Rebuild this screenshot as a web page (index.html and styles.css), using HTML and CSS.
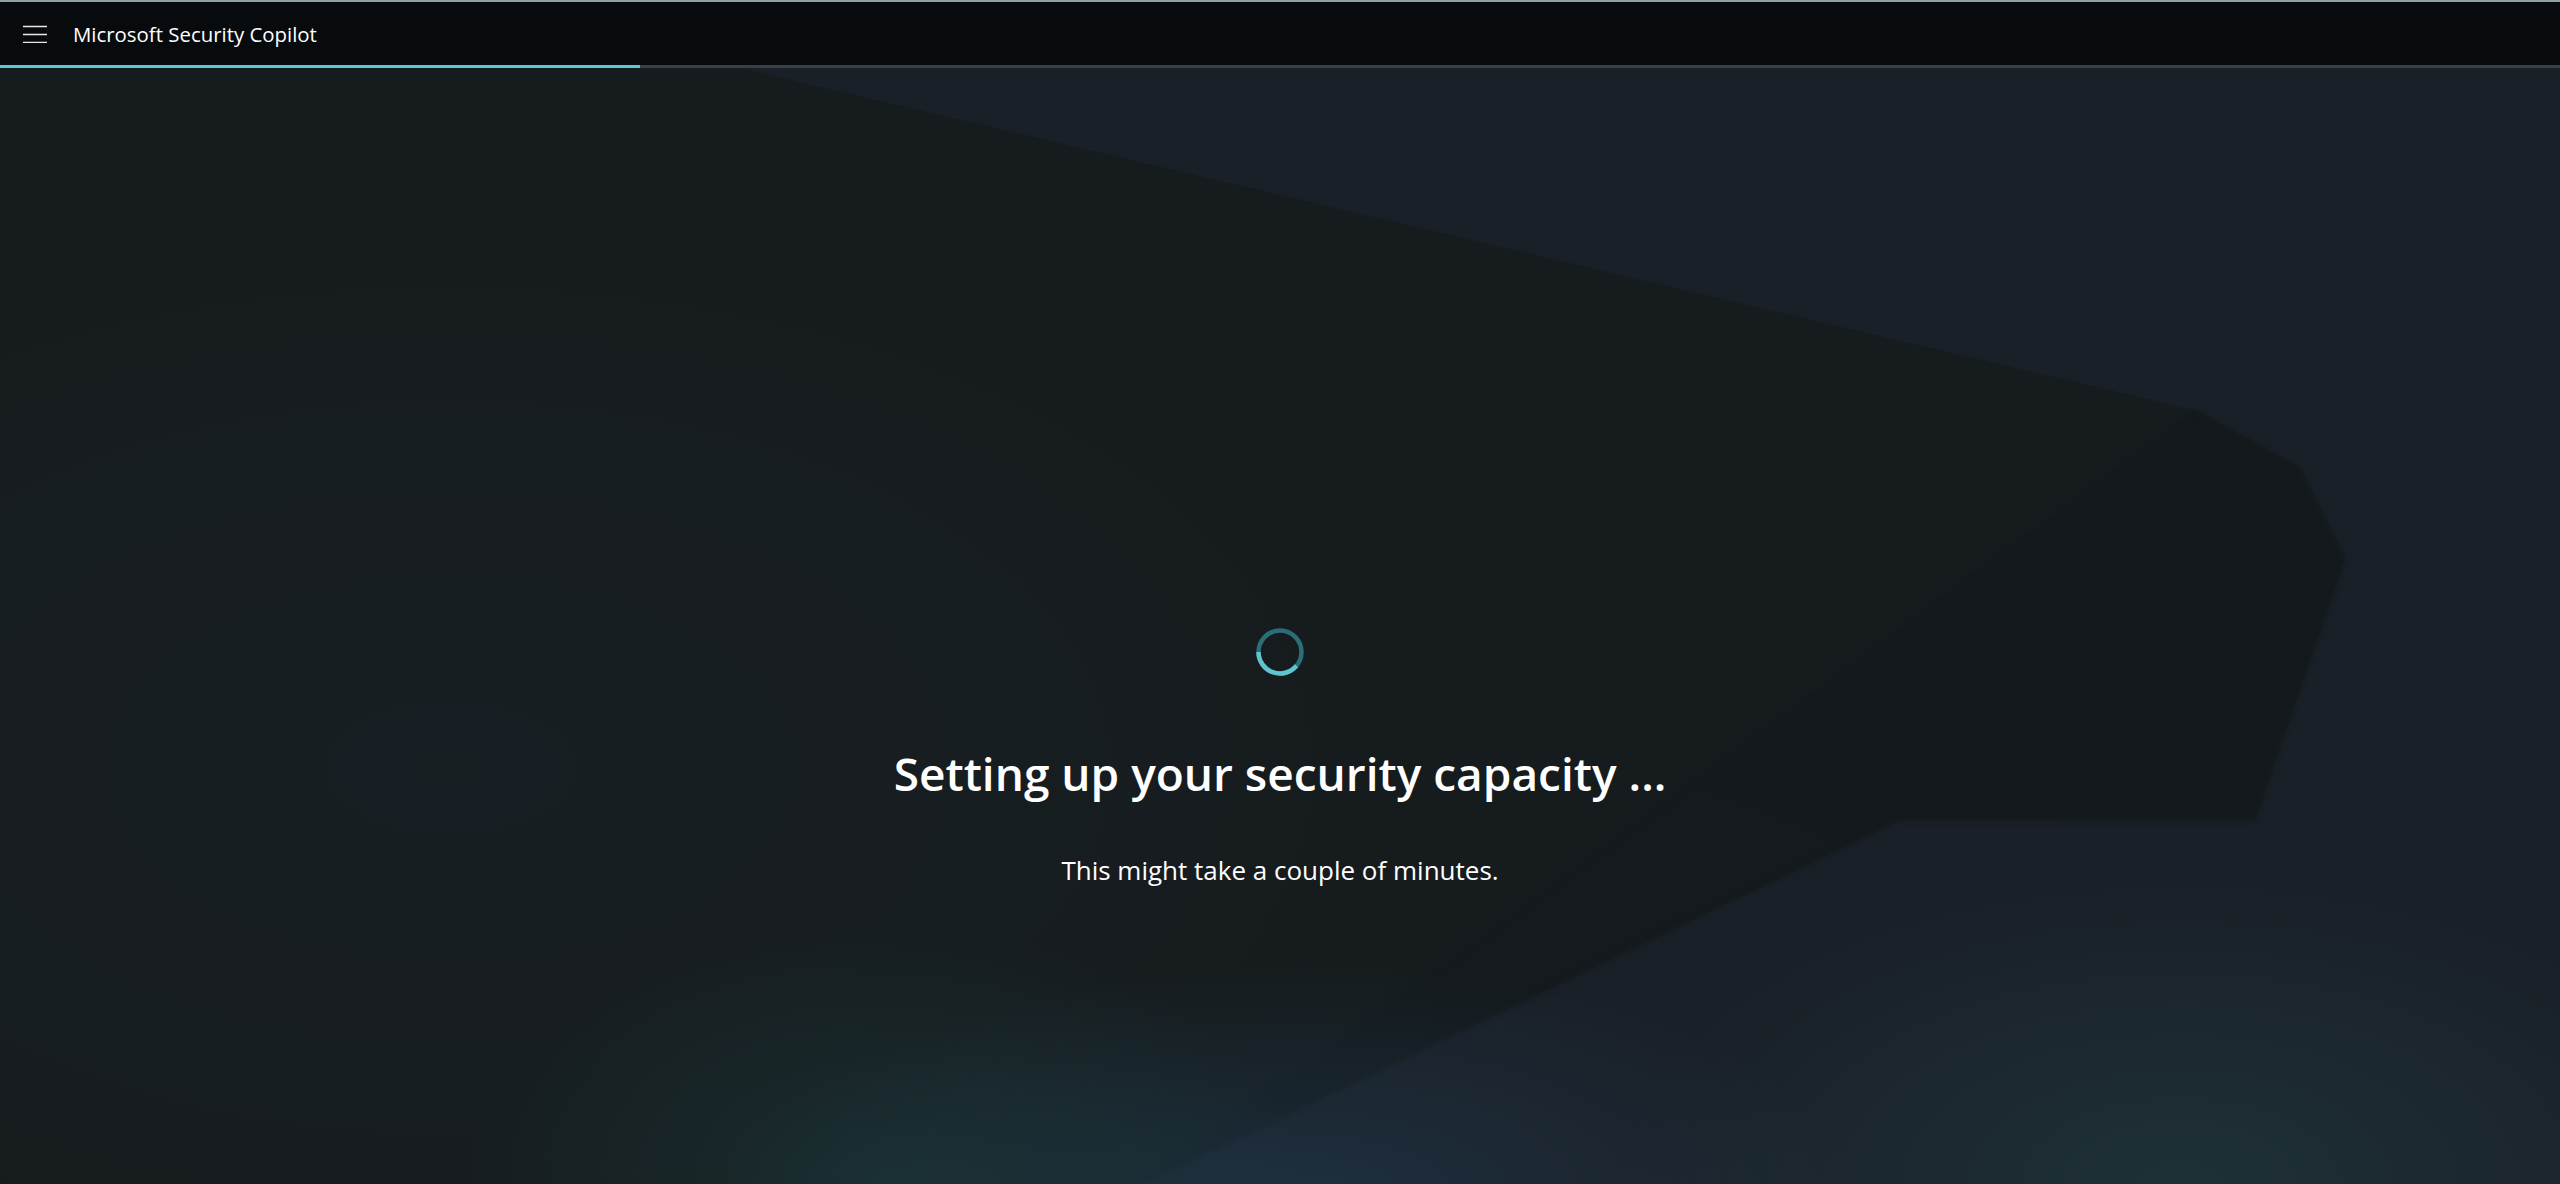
FILE: index.html
```html
<!DOCTYPE html>
<html>
<head>
<link rel="stylesheet" href="styles.css">
</head>
<body>

<div class="app">
  <div class="top-bar">
    <button class="menu-button" aria-label="Menu">
      <svg width="24" height="18" viewBox="0 0 24 18">
        <path d="M0 1.5H24M0 9.5H24M0 17.5H24" stroke="#e6e9ea" stroke-width="1.4" fill="none"/>
      </svg>
    </button>
    <div class="app-title">Microsoft Security Copilot</div>
  </div>
  <div class="load-track">
    <div class="load-fill"></div>
  </div>

  <div class="stage">
    <div class="backdrop">
      <div class="shape shape-main"></div>
      <div class="fold-wrap">
        <div class="shape shape-fold"></div>
      </div>
      <div class="glow"></div>
    </div>

    <div class="setup-panel">
      <svg class="spinner" width="48" height="48" viewBox="0 0 48 48">
        <circle cx="24" cy="24" r="21.5" stroke="#2c6e77" stroke-width="4.5" fill="none"/>
        <path d="M2.5 24A21.5 21.5 0 0 0 40.5 37.8" stroke="#5ec5cf" stroke-width="4.5" fill="none"/>
      </svg>
      <h1 class="setup-title">Setting up your security capacity ...</h1>
      <p class="setup-note">This might take a couple of minutes.</p>
    </div>
  </div>
</div>

</body>
</html>
```

FILE: styles.css
```css
html,
body {
  height: 100%;
}

body {
  background-color: #1a2027;
  color: white;
  font-family: "Segoe UI", "Open Sans", "Noto Sans", sans-serif;
  margin: 0;
  overflow: hidden;
}

.app {
  display: flex;
  flex-direction: column;
  height: 100vh;
}

.top-bar {
  align-items: center;
  background-color: #080b0e;
  border-top: 2px solid #8ea2a5;
  display: flex;
  height: 63px;
}

.menu-button {
  align-items: center;
  background: none;
  border: none;
  display: flex;
  margin-left: 23px;
  padding: 0;
}

.app-title {
  font-size: 20.4px;
  margin-left: 26px;
  margin-top: 1px;
}

.load-track {
  background-color: #3a3f47;
  height: 3px;
}

.load-fill {
  background-color: #5ec7d5;
  height: 100%;
  width: 640px;
}

.stage {
  flex: 1;
  position: relative;
}

.backdrop {
  inset: 0;
  overflow: hidden;
  position: absolute;
}

.shape {
  inset: 0;
  position: absolute;
}

.shape-main {
  background-color: #161c1e;
  clip-path: polygon(0 0, 740px 0, 2195px 342px, 2300px 400px, 2345px 490px, 2255px 752px, 1900px 752px, 1143px 1116px, 0 1116px);
}

.fold-wrap {
  filter: blur(3px);
  inset: 0;
  position: absolute;
}

.shape-fold {
  background: linear-gradient(200deg, #13191c 30%, #151b1e 85%);
  clip-path: polygon(2195px 342px, 2300px 400px, 2345px 490px, 2255px 752px, 1900px 752px, 1143px 1116px);
}

.glow {
  background:
    radial-gradient(ellipse 420px 260px at 880px 1116px, rgba(34, 84, 86, 0.3), transparent),
    radial-gradient(ellipse 560px 230px at 1300px 1130px, rgba(34, 62, 86, 0.5), transparent),
    radial-gradient(ellipse 560px 300px at 2180px 1116px, rgba(36, 80, 84, 0.35), transparent),
    radial-gradient(ellipse 900px 500px at 450px 700px, rgba(30, 40, 52, 0.25), transparent);
  inset: 0;
  position: absolute;
}

.setup-panel {
  align-items: center;
  display: flex;
  flex-direction: column;
  padding-top: 560px;
  position: relative;
}

.spinner {
  display: block;
}

.setup-title {
  font-family: "Open Sans", sans-serif;
  font-size: 46px;
  font-weight: 600;
  line-height: 62px;
  margin: 66px 0 0 0;
}

.setup-note {
  font-family: "Open Sans", sans-serif;
  font-size: 26px;
  line-height: 34px;
  margin: 49px 0 0 0;
}
```
